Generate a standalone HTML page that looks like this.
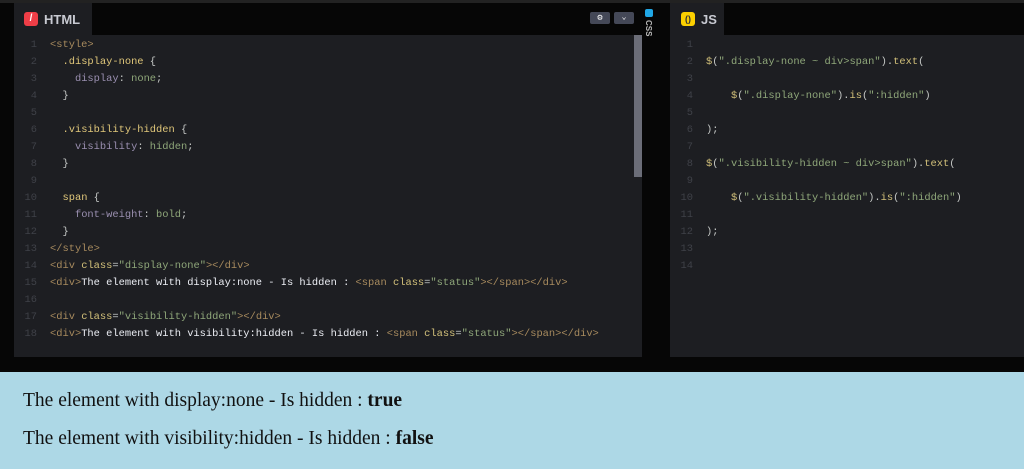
<!DOCTYPE html>
<html><head><style>
*{margin:0;padding:0;box-sizing:border-box}
body{width:1024px;height:469px;background:#060606;position:relative;overflow:hidden;font-family:"Liberation Mono",monospace}
.pane{position:absolute;background:#1d1e22}
.tab{position:absolute;top:3px;height:32px;background:#1d1e22;color:#c8cad2;font:bold 13px "Liberation Sans",sans-serif;display:flex;align-items:center}
.code{position:absolute;font-size:10.4px;line-height:17px;white-space:pre;color:#c5c8c6}
.ln{position:absolute;font-size:10.4px;line-height:17px;white-space:pre;color:#3f4148;text-align:right}
.t{color:#a88b5e}.a{color:#d2c07a}.s{color:#8fa77a}.p{color:#9a8fb0}.v{color:#8fa77a}.w{color:#eceef4}.sel{color:#e0c77a}.g{color:#9c9ea8}
</style></head><body>
<div style="position:absolute;left:0;top:0;width:1024px;height:3px;background:#222"></div>
<div class="pane" style="left:14px;top:35px;width:628px;height:322px"></div>
<div class="tab" style="left:14px;width:78px"><span style="display:inline-block;width:14px;height:14px;background:#ef3e47;border-radius:3px;margin:0 6px 0 10px;color:#fff;font-size:10px;text-align:center;line-height:14px">/</span>HTML</div>
<div style="position:absolute;left:590px;top:12px;width:20px;height:12px;background:#444857;border-radius:2px;color:#fff;font-size:9px;text-align:center;line-height:12px">⚙</div>
<div style="position:absolute;left:614px;top:12px;width:20px;height:12px;background:#444857;border-radius:2px;color:#fff;font-size:8px;text-align:center;line-height:12px">⌄</div>
<div style="position:absolute;left:634px;top:35px;width:8px;height:142px;background:#6b6d78"></div>
<div style="position:absolute;left:645px;top:9px;width:8px;height:8px;background:#20a7e6;border-radius:2px"></div>
<div style="position:absolute;left:644px;top:20px;color:#bbb;font:bold 8px 'Liberation Sans',sans-serif;writing-mode:vertical-rl">CSS</div>
<div class="ln" style="left:16px;top:37px;width:21px">1
2
3
4
5
6
7
8
9
10
11
12
13
14
15
16
17
18</div>
<div class="code" style="left:50px;top:37px"><span class="t">&lt;style&gt;</span>
  <span class="sel">.display-none</span> {
    <span class="p">display</span>: <span class="v">none</span>;
  }

  <span class="sel">.visibility-hidden</span> {
    <span class="p">visibility</span>: <span class="v">hidden</span>;
  }

  <span class="sel">span</span> {
    <span class="p">font-weight</span>: <span class="v">bold</span>;
  }
<span class="t">&lt;/style&gt;</span>
<span class="t">&lt;div</span> <span class="a">class</span>=<span class="s">"display-none"</span><span class="t">&gt;&lt;/div&gt;</span>
<span class="t">&lt;div&gt;</span><span class="w">The element with display:none - Is hidden : </span><span class="t">&lt;span</span> <span class="a">class</span>=<span class="s">"status"</span><span class="t">&gt;&lt;/span&gt;&lt;/div&gt;</span>

<span class="t">&lt;div</span> <span class="a">class</span>=<span class="s">"visibility-hidden"</span><span class="t">&gt;&lt;/div&gt;</span>
<span class="t">&lt;div&gt;</span><span class="w">The element with visibility:hidden - Is hidden : </span><span class="t">&lt;span</span> <span class="a">class</span>=<span class="s">"status"</span><span class="t">&gt;&lt;/span&gt;&lt;/div&gt;</span></div>

<div class="pane" style="left:670px;top:35px;width:354px;height:322px"></div>
<div class="tab" style="left:670px;width:54px"><span style="display:inline-block;width:14px;height:14px;background:#fcd000;border-radius:3px;margin:0 6px 0 11px;color:#333;font-size:9px;text-align:center;line-height:14px">()</span>JS</div>
<div class="ln" style="left:672px;top:37px;width:21px">1
2
3
4
5
6
7
8
9
10
11
12
13
14</div>
<div class="code" style="left:706px;top:37px">
<span class="a">$</span>(<span class="s">".display-none ~ div&gt;span"</span>).<span class="a">text</span>(

    <span class="a">$</span>(<span class="s">".display-none"</span>).<span class="a">is</span>(<span class="s">":hidden"</span>)

);

<span class="a">$</span>(<span class="s">".visibility-hidden ~ div&gt;span"</span>).<span class="a">text</span>(

    <span class="a">$</span>(<span class="s">".visibility-hidden"</span>).<span class="a">is</span>(<span class="s">":hidden"</span>)

);</div>

<div style="position:absolute;left:0;top:372px;width:1024px;height:97px;background:#add8e6;font:19.5px 'Liberation Serif',serif;color:#111">
<div style="position:absolute;left:23px;top:18px">The element with display:none - Is hidden : <b>true</b></div>
<div style="position:absolute;left:23px;top:56px">The element with visibility:hidden - Is hidden : <b>false</b></div>
</div>
</body></html>
